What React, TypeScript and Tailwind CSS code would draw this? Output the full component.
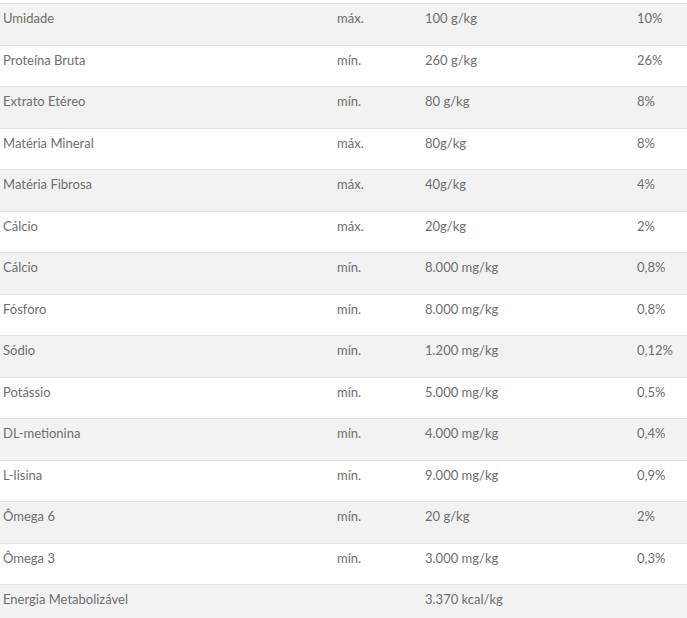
const rows: [string, string, string, string][] = [
  ["Umidade", "máx.", "100 g/kg", "10%"],
  ["Proteína Bruta", "mín.", "260 g/kg", "26%"],
  ["Extrato Etéreo", "mín.", "80 g/kg", "8%"],
  ["Matéria Mineral", "máx.", "80g/kg", "8%"],
  ["Matéria Fibrosa", "máx.", "40g/kg", "4%"],
  ["Cálcio", "máx.", "20g/kg", "2%"],
  ["Cálcio", "mín.", "8.000 mg/kg", "0,8%"],
  ["Fósforo", "mín.", "8.000 mg/kg", "0,8%"],
  ["Sódio", "mín.", "1.200 mg/kg", "0,12%"],
  ["Potássio", "mín.", "5.000 mg/kg", "0,5%"],
  ["DL-metionina", "mín.", "4.000 mg/kg", "0,4%"],
  ["L-lisina", "mín.", "9.000 mg/kg", "0,9%"],
  ["Ômega 6", "mín.", "20 g/kg", "2%"],
  ["Ômega 3", "mín.", "3.000 mg/kg", "0,3%"],
  ["Energia Metabolizável", "", "3.370 kcal/kg", ""],
]

export default function App() {
  return (
    <div className="w-[687px] h-[618px] overflow-hidden bg-white pt-[3px] font-['Lato',sans-serif] text-[13px] text-[#6e6e6e]">
      <div className="border-t border-[#e2e2e2]">
        {rows.map((r, i) => (
          <div
            key={i}
            className={
              "grid grid-cols-[334px_88px_212px_1fr] h-[41.5px] border-b border-[#e2e2e2] pl-[3px] pt-[3px] leading-[22px] " +
              (i % 2 === 0 ? "bg-[#f2f2f2]" : "bg-white")
            }
          >
            <span>{r[0]}</span>
            <span>{r[1]}</span>
            <span>{r[2]}</span>
            <span>{r[3]}</span>
          </div>
        ))}
      </div>
    </div>
  )
}
